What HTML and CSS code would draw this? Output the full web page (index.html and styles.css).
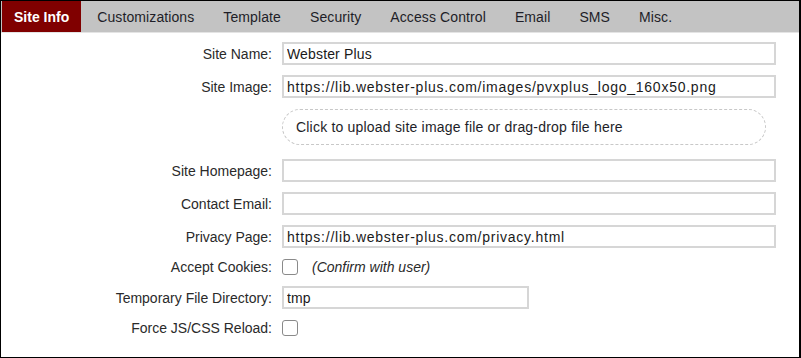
FILE: index.html
```html
<!DOCTYPE html>
<html lang="en">
<head>
    <meta charset="UTF-8">
    <meta name="viewport" content="width=device-width, initial-scale=1.0">
    <title>Site Settings</title>
    <link rel="stylesheet" href="styles.css">
</head>
<body>

    <div class="settings-frame">
        <!-- Tabs -->
        <div class="tab-bar">
            <div class="tab active">Site Info</div>
            <div class="tab">Customizations</div>
            <div class="tab">Template</div>
            <div class="tab">Security</div>
            <div class="tab">Access Control</div>
            <div class="tab">Email</div>
            <div class="tab">SMS</div>
            <div class="tab">Misc.</div>
        </div>

        <form class="site-form">
            <label class="field-label" for="siteName">Site Name:</label>
            <input type="text" id="siteName" class="text-field" value="Webster Plus">

            <label class="field-label" for="siteImage">Site Image:</label>
            <input type="text" id="siteImage" class="text-field url-field" value="https://lib.webster-plus.com/images/pvxplus_logo_160x50.png">

            <div class="field-label"></div>
            <div class="drop-zone">Click to upload site image file or drag-drop file here</div>

            <label class="field-label" for="siteHome">Site Homepage:</label>
            <input type="text" id="siteHome" class="text-field url-field" value="">

            <label class="field-label" for="contactEmail">Contact Email:</label>
            <input type="text" id="contactEmail" class="text-field" value="">

            <label class="field-label" for="privacyPage">Privacy Page:</label>
            <input type="text" id="privacyPage" class="text-field url-field" value="https://lib.webster-plus.com/privacy.html">

            <label class="field-label" for="acceptCookies">Accept Cookies:</label>
            <div class="check-row">
                <input type="checkbox" id="acceptCookies" class="check-box">
                <span class="hint">(Confirm with user)</span>
            </div>

            <label class="field-label" for="tmpDir">Temporary File Directory:</label>
            <input type="text" id="tmpDir" class="text-field short" value="tmp">

            <label class="field-label" for="forceReload">Force JS/CSS Reload:</label>
            <div class="check-row">
                <input type="checkbox" id="forceReload" class="check-box">
            </div>
        </form>
    </div>

</body>
</html>
```

FILE: styles.css
```css
body {
    margin: 0;
    font-family: "Liberation Sans", Arial, sans-serif;
    font-size: 14px;
    color: #222;
    background: #fff;
}

.settings-frame {
    width: 801px;
    height: 358px;
    box-sizing: border-box;
    border: 1px solid #000;
    border-right-width: 2px;
    overflow: hidden;
}

.tab-bar {
    display: flex;
    gap: 5px;
    height: 31px;
    padding-left: 1px;
    background: #c3c3c3;
    border-bottom: 1px solid #e4e4e4;
}

.tab {
    display: flex;
    align-items: center;
    padding: 0 12px;
    color: #1e1e28;
    letter-spacing: 0.1px;
}

.tab.active {
    margin-right: -1px;
    background: #800000;
    color: #fff;
    font-weight: bold;
    letter-spacing: 0;
}

.site-form {
    display: grid;
    grid-template-columns: 271px 494px;
    column-gap: 10px;
    row-gap: 10px;
    padding-top: 9px;
    align-items: center;
}

.field-label {
    text-align: right;
    color: #2a2a2a;
}

.text-field {
    height: 23px;
    box-sizing: border-box;
    margin: 0;
    padding: 0 3px;
    border: 2px solid #d6d6d6;
    font-family: inherit;
    font-size: 14px;
    letter-spacing: 0.15px;
    color: #1a1a1a;
    outline: none;
}

/* urls are full of narrow glyphs, spread them like the original */
.text-field.url-field {
    letter-spacing: 0.75px;
}

.text-field.short {
    width: 247px;
}

.drop-zone {
    width: 484px;
    height: 36px;
    box-sizing: border-box;
    margin-top: 1px;
    margin-bottom: 4px;
    padding-left: 13px;
    display: flex;
    align-items: center;
    border: 1px dashed #c8c8c8;
    border-radius: 18px;
    color: #1e1e28;
    letter-spacing: 0.2px;
}

.check-row {
    display: flex;
    align-items: center;
    height: 18px;
    gap: 14px;
}

.check-box {
    appearance: none;
    width: 16px;
    height: 16px;
    margin: 0;
    border: 1px solid #8a8a8a;
    border-radius: 3px;
    background: #fff;
}

.hint {
    font-style: italic;
    color: #2a2a2a;
}
```
